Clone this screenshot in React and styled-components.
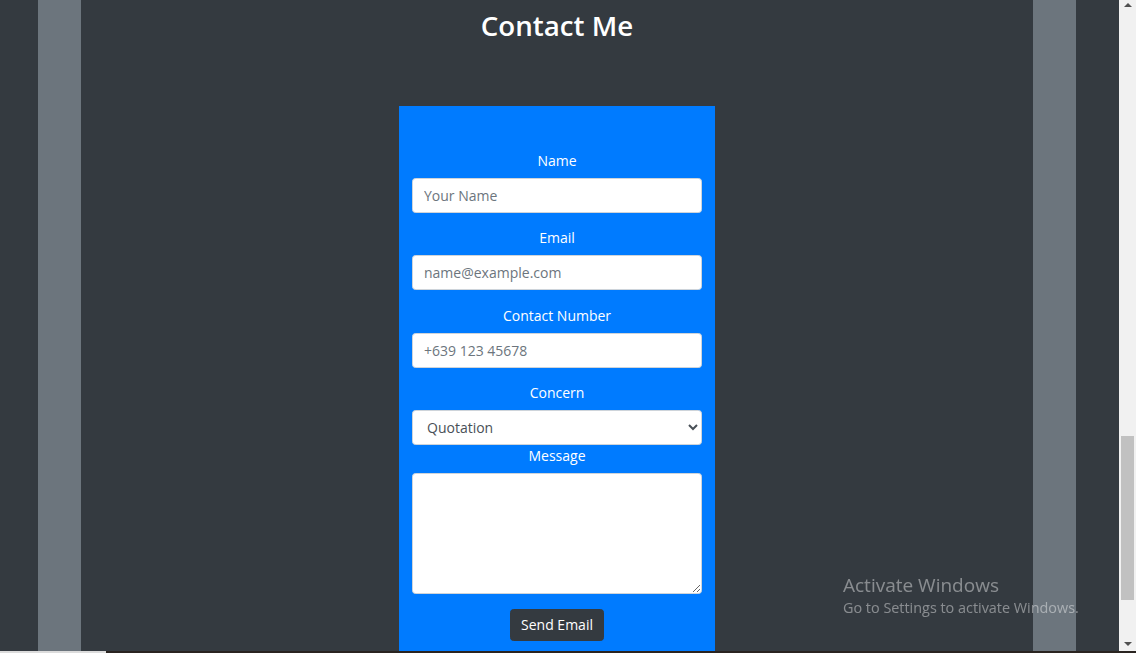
import React from "react";
import styled, { createGlobalStyle } from "styled-components";

const GlobalStyle = createGlobalStyle`
  html, body {
    margin: 0;
    height: 100%;
    overflow: hidden;
    background: #343a40;
    font-family: "Open Sans", "Noto Sans", "Liberation Sans", sans-serif;
  }
  #root { height: 100%; }
  * { box-sizing: border-box; }
`;

const Screen = styled.div`
  height: 100vh;
  display: flex;
  flex-direction: column;
`;

const Viewport = styled.div`
  flex: 1;
  min-height: 0;
  display: flex;
`;

const Page = styled.div`
  flex: 1;
  background: #343a40;
  padding: 0 43px 0 38px;
  overflow: hidden;
`;

const Frame = styled.section`
  height: 100%;
  border-left: 43px solid #6c757d;
  border-right: 43px solid #6c757d;
  display: flex;
  flex-direction: column;
  align-items: center;
`;

const Title = styled.h1`
  flex-shrink: 0;
  margin: 0;
  padding-top: 4px;
  height: 106px;
  font-size: 27.7px;
  line-height: 42px;
  font-weight: 600;
  color: #fff;
`;

const Form = styled.form`
  flex-shrink: 0;
  width: 316px;
  background: #007bff;
  padding: 44px 13px 14px;
  text-align: center;
  color: #fff;
  font-size: 14px;
`;

const Group = styled.div`
  margin-bottom: ${(p) => (p.$tight ? "0" : "14.33px")};
`;

const Label = styled.label`
  display: block;
  line-height: 21px;
  margin-bottom: 7px;
`;

const fieldBase = `
  display: block;
  width: 100%;
  border: 1px solid #ced4da;
  border-radius: 3.5px;
  background: #fff;
  color: #495057;
  font-family: inherit;
  font-size: 14px;
  &::placeholder { color: #6c757d; }
`;

const Input = styled.input`
  ${fieldBase}
  height: 35px;
  padding: 5px 11px;
`;

const Select = styled.select`
  ${fieldBase}
  height: 35px;
  padding: 5px 10px;
`;

const TextArea = styled.textarea`
  ${fieldBase}
  height: 121px;
  padding: 5px 11px;
`;

const Button = styled.button`
  margin-top: 15px;
  background: #343a40;
  color: #fff;
  border: 1px solid #343a40;
  border-radius: 3.5px;
  padding: 5px 10px;
  height: 32px;
  font-family: inherit;
  font-size: 14px;
`;

const Scrollbar = styled.div`
  width: 17px;
  background: #f1f1f1;
  display: flex;
  flex-direction: column;
  align-items: center;
  justify-content: space-between;
  padding: 3px 0 5px;
  position: relative;
`;

const Arrow = styled.div`
  width: 0;
  height: 0;
  border-left: 4px solid transparent;
  border-right: 4px solid transparent;
  ${(p) =>
    p.$down
      ? "border-top: 4px solid #505050;"
      : "border-bottom: 4px solid #505050;"}
`;

const Thumb = styled.div`
  position: absolute;
  left: 2px;
  right: 2px;
  top: 436px;
  height: 164px;
  background: #c1c1c1;
`;

const Taskbar = styled.div`
  height: 2px;
  display: flex;
`;

const TaskStart = styled.div`
  width: 106px;
  background: #dcdcdc;
`;

const TaskRest = styled.div`
  flex: 1;
  background: #2a2420;
`;

const Watermark = styled.div`
  position: fixed;
  left: 843px;
  top: 573px;
  color: rgba(255, 255, 255, 0.42);
  font-family: "Open Sans", "Noto Sans", sans-serif;
  pointer-events: none;

  strong {
    display: block;
    font-weight: 400;
    font-size: 19px;
    line-height: 24px;
  }
  span {
    display: block;
    font-size: 14.4px;
    line-height: 22px;
  }
`;

const fields = [
  { id: "name", label: "Name", type: "text", placeholder: "Your Name" },
  { id: "email", label: "Email", type: "email", placeholder: "name@example.com" },
  { id: "phone", label: "Contact Number", type: "tel", placeholder: "+639 123 45678" },
];

export default function App() {
  return (
    <>
      <GlobalStyle />
      <Screen>
        <Viewport>
          <Page>
            <Frame>
              <Title>Contact Me</Title>
              <Form onSubmit={(e) => e.preventDefault()}>
                {fields.map((f) => (
                  <Group key={f.id}>
                    <Label htmlFor={f.id}>{f.label}</Label>
                    <Input id={f.id} type={f.type} placeholder={f.placeholder} />
                  </Group>
                ))}
                <Group $tight>
                  <Label htmlFor="concern">Concern</Label>
                  <Select id="concern" defaultValue="Quotation">
                    <option>Quotation</option>
                    <option>Inquiry</option>
                    <option>Other</option>
                  </Select>
                </Group>
                <Group $tight>
                  <Label htmlFor="message">Message</Label>
                  <TextArea id="message" />
                </Group>
                <Button type="submit">Send Email</Button>
              </Form>
            </Frame>
          </Page>
          <Scrollbar>
            <Arrow />
            <Thumb />
            <Arrow $down />
          </Scrollbar>
        </Viewport>
        <Taskbar>
          <TaskStart />
          <TaskRest />
        </Taskbar>
      </Screen>
      <Watermark>
        <strong>Activate Windows</strong>
        <span>Go to Settings to activate Windows.</span>
      </Watermark>
    </>
  );
}
